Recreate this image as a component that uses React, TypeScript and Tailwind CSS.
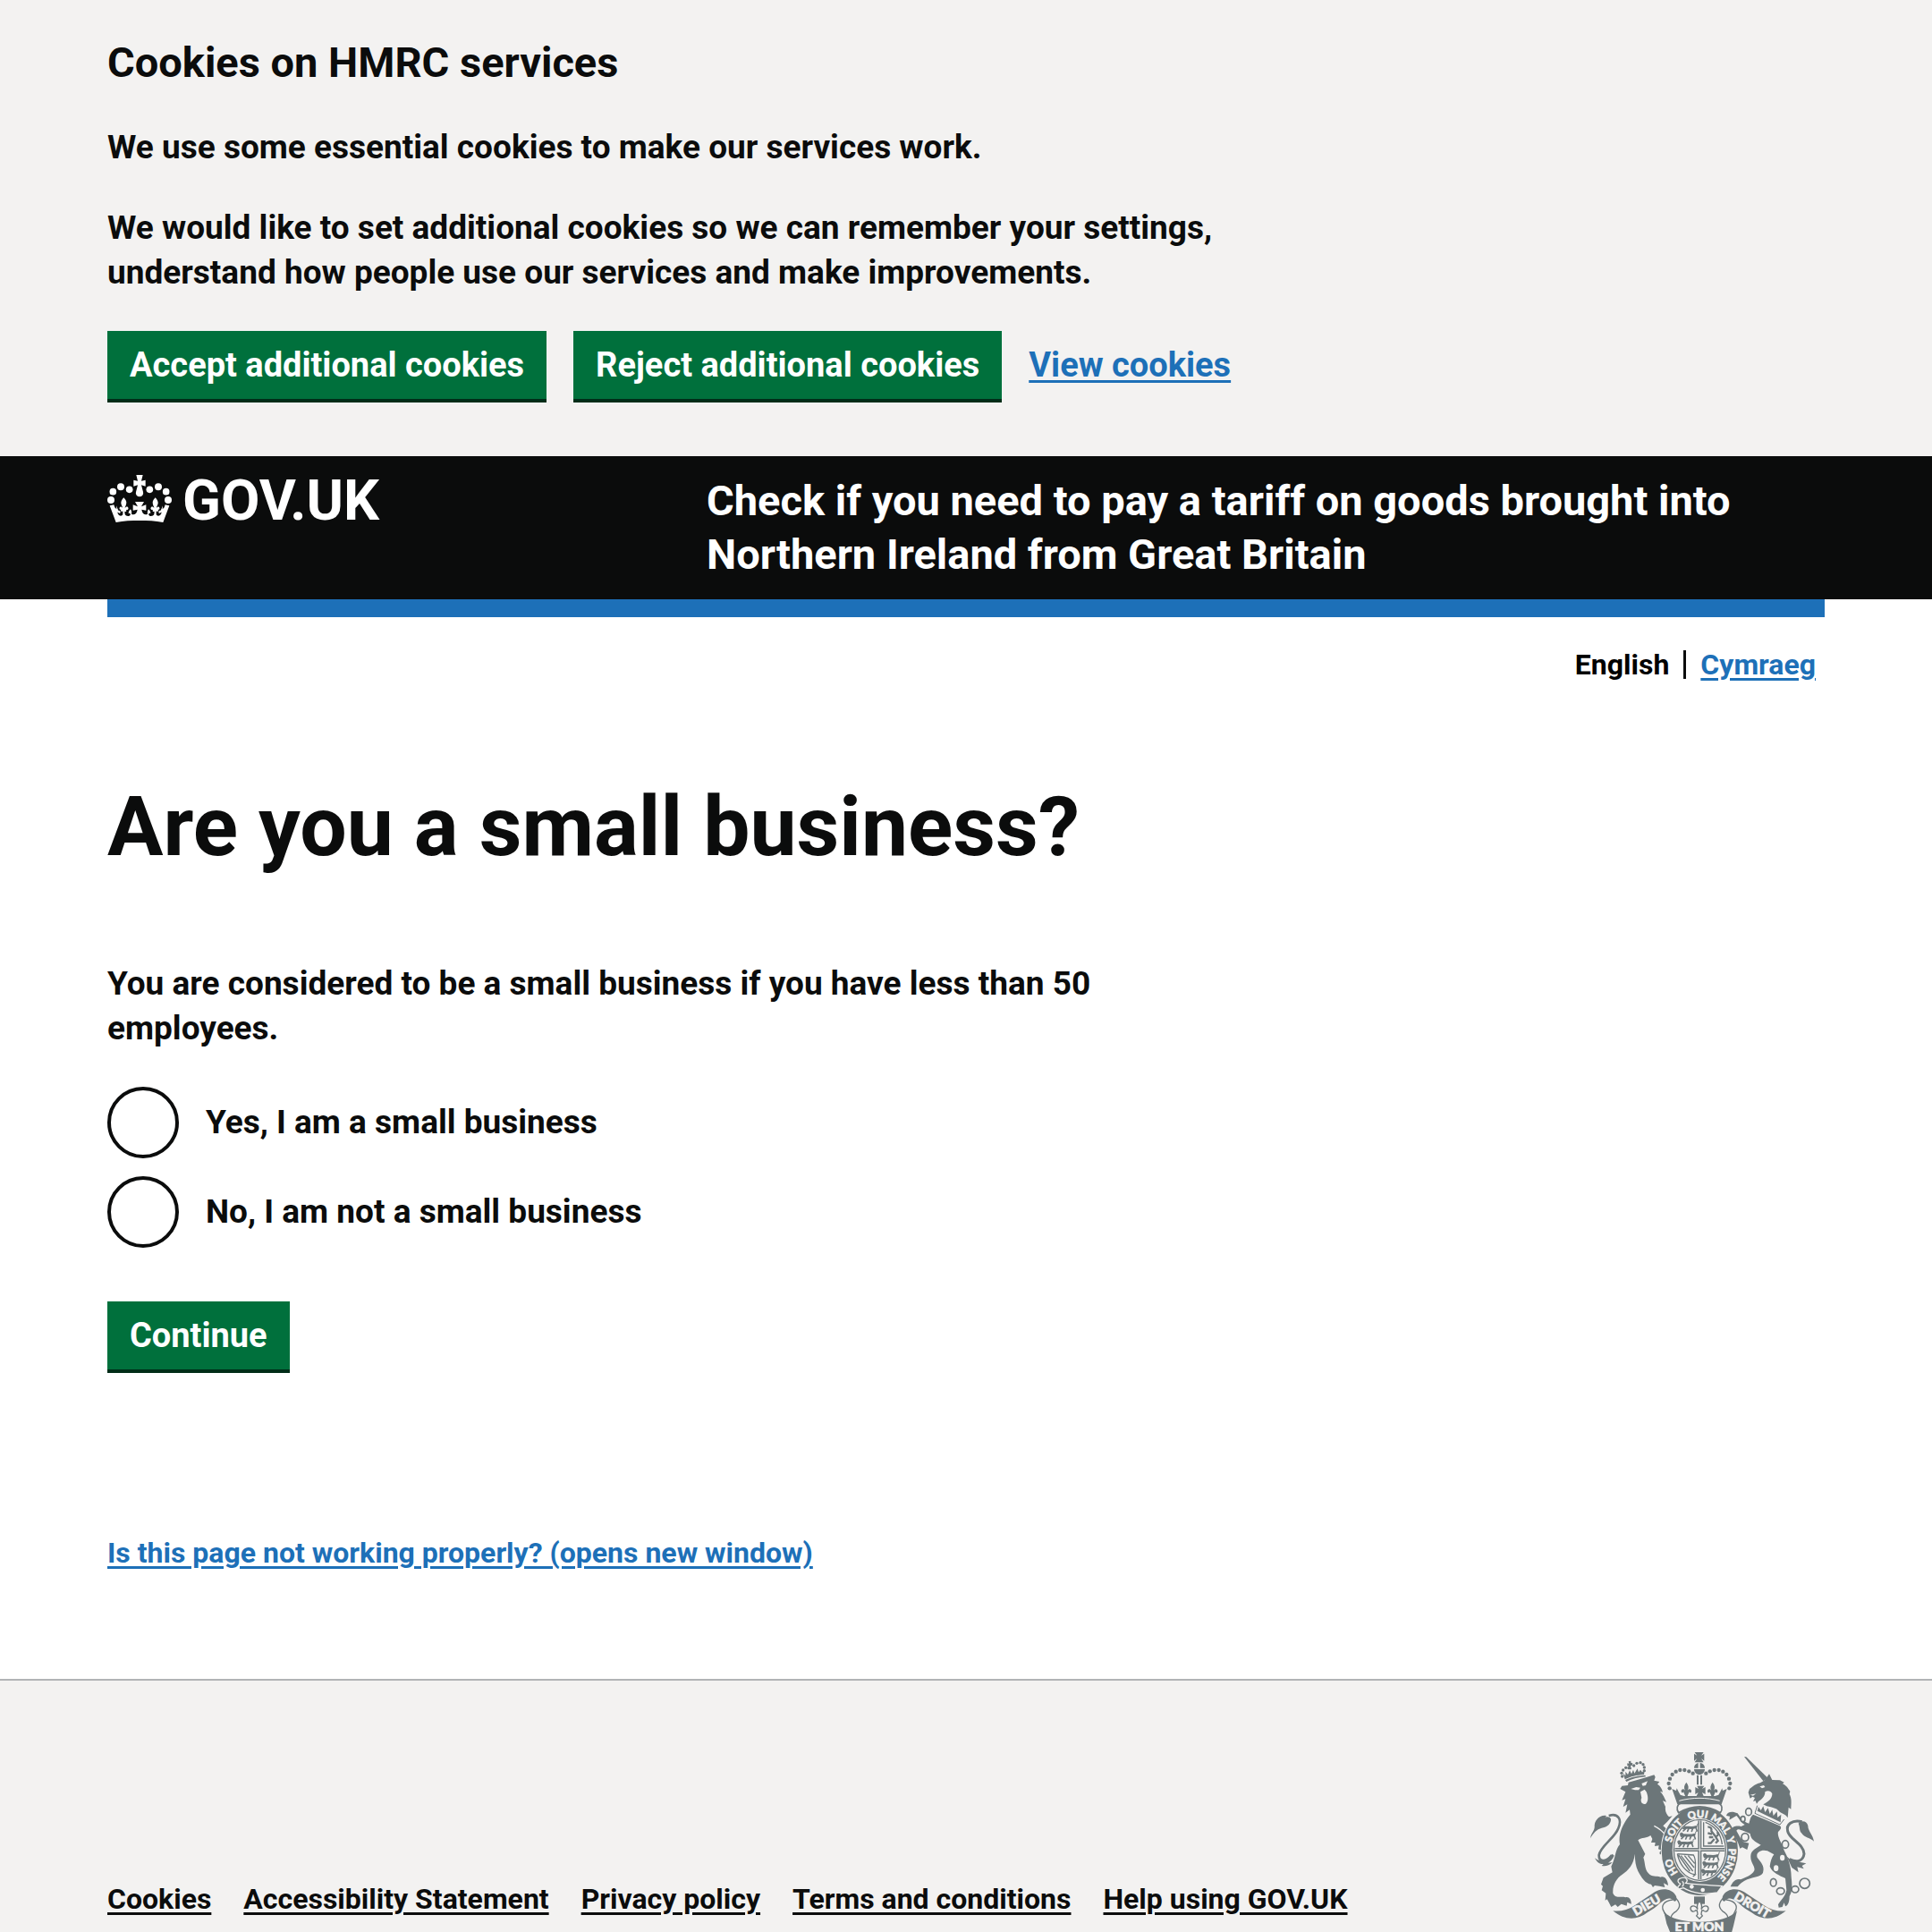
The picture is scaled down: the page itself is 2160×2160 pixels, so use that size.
import type { ReactNode } from "react";

const LIGHT = "#f3f2f1";
const GREY = "#6c7679";

function Container({ className = "", children }: { className?: string; children: ReactNode }) {
  return <div className={`mx-auto w-full max-w-[2160px] px-30 ${className}`}>{children}</div>;
}

function Button({ children }: { children: ReactNode }) {
  return (
    <button
      type="button"
      className="mb-1 h-19 cursor-pointer bg-[#00703c] px-[25px] text-[38px] leading-[50px] text-white shadow-[0_4px_0_#002d18]"
    >
      {children}
    </button>
  );
}

function CrownHalf() {
  return (
    <>
      <circle cx="72" cy="147" r="12" />
      <circle cx="79" cy="119" r="11.5" />
      <circle cx="105" cy="103" r="12" />
      <circle cx="134" cy="112" r="11.5" />
      <path d="M68 166L82 163L85 172L91 178L90 166L97 182C104 181 106 188 102 192C98 190 96 188 94 188C96 200 108 204 112 196L112 184C108 188 103 184 106 179C100 181 99 173 103 170C107 168 110 171 111 174C112 168 106 166 106 155C107 148 112 143 115 139C119 144 124 149 124 155C124 165 119 168 119 174C121 170 126 168 129 171C133 176 129 182 123 179C126 185 122 188 118 185L119 195C122 202 134 203 137 197C139 192 134 190 131 192C131 186 134 182 138 178C142 184 142 190 141 194C149 199 159 194 161 179L146 182V163L162 169L153 153H169V216C140 216 115 217 89 222Z" />
    </>
  );
}

function GovCrown() {
  return (
    <svg viewBox="60 60 216 162" className="h-[54px] w-[72px]" fill="#fff" aria-hidden="true">
      <CrownHalf />
      <g transform="matrix(-1 0 0 1 336 0)">
        <CrownHalf />
      </g>
      <path d="M157 63H179L174 83L188 80V101L174 97L180 120A12.5 12.5 0 1 1 156 120L162 97L148 101V80L162 83Z" />
    </svg>
  );
}

const ARCH: [number, number][] = [
  [320, 178], [317, 162], [321, 146], [329, 132], [341, 122], [355, 117], [370, 117], [385, 121], [398, 128],
];
const LION_CROWN: [number, number][] = [
  [161, 138], [159, 127], [164, 117], [173, 109], [183, 110], [200, 102], [210, 94], [222, 92], [231, 98], [235, 108], [235, 119],
];

function Fleur({ x, y }: { x: number; y: number }) {
  return (
    <path
      transform={`translate(${x} ${y})`}
      d="M0 -24C8 -14 9 -6 4 4C8 -4 18 -2 17 7C16 12 11 12 9 8C9 14 5 16 4 22H-4C-5 16 -9 14 -9 8C-11 12 -16 12 -17 7C-18 -2 -8 -4 -4 4C-9 -6 -8 -14 0 -24Z"
    />
  );
}

function WalkingLion({ x, y }: { x: number; y: number }) {
  return (
    <g transform={`translate(${x} ${y})`} fill="none" stroke={GREY} strokeLinecap="round">
      <path d="M4 9C16 4 30 12 46 6" strokeWidth="9" />
      <circle cx="4" cy="4" r="5" fill={GREY} strokeWidth="2" />
      <path d="M12 11L4 19M22 11L18 20M36 10L32 20M46 8L50 19" strokeWidth="5" />
      <path d="M47 6C56 2 46 -6 54 -5" strokeWidth="3" />
    </g>
  );
}

function MottoText({ offset, children }: { offset: string; children: string }) {
  return (
    <text fontSize="34" textAnchor="middle" fill={LIGHT} stroke={LIGHT} strokeWidth="1.5">
      <textPath href="#garter" startOffset={offset}>
        {children}
      </textPath>
    </text>
  );
}

function RoyalArms() {
  return (
    <svg
      viewBox="54 57 750 603"
      className="h-[201px] w-[250px] font-['Lato',sans-serif] font-black"
      fill={GREY}
      role="img"
      aria-label="Royal coat of arms"
    >
      <defs>
        <path id="garter" d="M421 498A97 111 0 0 1 421 276A97 111 0 0 1 421 498" />
        <clipPath id="oval">
          <ellipse cx="421" cy="385" rx="84" ry="99" />
        </clipPath>
      </defs>

      {/* Lion supporter */}
      <path
        d="M116 270C150 260 160 285 148 312C136 345 88 372 83 402C82 424 104 428 126 402"
        fill="none" stroke={GREY} strokeWidth="8"
      />
      <path d="M54 346C56 326 70 322 68 302C70 282 88 266 108 270L104 275C116 272 124 276 123 285C120 302 108 308 92 311C76 315 64 328 54 346Z" />
      <path d="M69 412C82 424 104 424 128 398L134 404C128 418 120 424 114 428L128 426C118 438 104 440 92 438L98 432C86 434 76 426 69 412Z" />
      <path d="M154 180L160 170L180 168L182 158L240 142L268 133L272 140L268 152L286 156L279 164C290 170 294 180 297 191L288 188C298 198 304 212 309 224L297 220L306 240C304 256 310 266 318 274L329 271L312 290L298 304L316 320C326 344 334 372 332 404L322 414L308 412L312 404L294 412L298 398L288 400C284 394 288 388 294 386L282 382L284 370L270 372L272 360L258 360L262 348L256 336C244 346 226 342 214 352L238 398L232 410C238 426 236 448 248 462C262 478 274 470 290 476C302 470 314 484 315 504L300 496L304 510L286 506L270 504L264 510L258 500C238 498 226 478 214 456C206 440 204 420 203 398C200 434 182 452 160 468C142 480 128 502 130 530C140 550 160 538 172 544C184 540 192 552 191 566L178 560L176 572L158 566L146 576L138 568L124 576L116 560L110 550L104 554L106 530L92 520L96 506L90 500L98 478L128 460L124 440C140 410 136 386 153 366C146 330 166 292 188 266L186 250L172 260L178 232L164 240L172 214L160 218L172 190Z" />
      <path d="M190 180L208 174L222 176L216 184L204 184ZM226 162L246 154L240 168L230 170ZM222 190L236 182L242 190C248 204 250 222 240 230C228 234 220 222 226 210Z" fill={LIGHT} />
      <path d="M268 304C284 312 298 324 308 336" fill="none" stroke={LIGHT} strokeWidth="4" />
      {LION_CROWN.map(([cx, cy]) => <circle key={`${cx}-${cy}`} cx={cx} cy={cy} r="5" />)}
      <path d="M182 88L190 86L190 92L196 94L194 102L189 102L192 114L186 115L183 104L178 102L178 94L184 95Z" />
      <path d="M164 128L172 136L172 122L180 132L186 118L192 130L198 116L202 128L212 112L216 124L222 116L228 124L236 118L234 132C208 134 190 138 170 148Z" />
      <path d="M171 150C190 140 216 136 238 134L240 139C216 141 194 146 175 156Z" />

      {/* Garter and quartered shield */}
      <ellipse cx="421" cy="388" rx="128" ry="149" stroke={LIGHT} strokeWidth="5" className="[paint-order:stroke]" />
      <ellipse cx="421" cy="385" rx="92" ry="107" fill={LIGHT} />
      <ellipse cx="421" cy="385" rx="87" ry="102" fill="none" stroke={GREY} strokeWidth="4" />
      <g clipPath="url(#oval)">
        <path d="M421 270V500M320 384H520" stroke={GREY} strokeWidth="12" />
        <path d="M421 270V500M320 384H520" stroke={LIGHT} strokeWidth="3" />
        <WalkingLion x={362} y={302} />
        <WalkingLion x={356} y={328} />
        <WalkingLion x={348} y={354} />
        <WalkingLion x={434} y={398} />
        <WalkingLion x={432} y={424} />
        <WalkingLion x={428} y={450} />
        <path d="M434 292V372H502M440 292C470 304 492 330 496 366" fill="none" stroke={GREY} strokeWidth="4" />
        <path
          d="M448 308C458 306 462 314 460 322L474 340C484 338 486 328 478 326M474 340L482 354L474 362M462 332L448 328M466 342L452 342M470 348L458 362H448"
          fill="none" stroke={GREY} strokeWidth="7"
        />
        <path d="M346 398L400 402C412 420 404 444 406 466M346 398C352 430 374 462 406 468L398 474M358 404L398 456M370 404L402 444M382 404L404 430M350 402L388 456" fill="none" stroke={GREY} strokeWidth="4" />
      </g>
      <MottoText offset="17%">HO</MottoText>
      <MottoText offset="35%">SOIT</MottoText>
      <MottoText offset="49%">QUI</MottoText>
      <MottoText offset="61%">MAL</MottoText>
      <MottoText offset="70%">Y</MottoText>
      <MottoText offset="82%">PENSE</MottoText>
      <path d="M352 482C376 470 384 486 374 496C400 500 450 502 496 506L480 528C440 536 396 530 366 512L352 516C340 508 356 504 356 498C346 494 346 486 352 482Z" stroke={LIGHT} strokeWidth="4" />
      <path d="M362 490C370 496 366 504 362 508" stroke={LIGHT} strokeWidth="4" fill="none" />
      <circle cx="394" cy="508" r="7" fill={LIGHT} />
      <circle cx="431" cy="519" r="7" fill={LIGHT} />

      {/* Unicorn supporter */}
      <path d="M570 72L577 73L650 144L634 154Z" />
      <path d="M584 192L588 180C600 172 606 164 624 160L640 150L654 130L664 150L690 151L704 158L699 163C712 168 718 180 724 188L722 198C730 212 728 228 727 248L719 242L716 277C708 262 696 266 684 252C672 240 648 242 634 232C650 224 664 214 664 196C660 186 648 184 640 190C640 206 630 214 618 222L612 230L608 220L600 222L606 210L598 206L590 212Z" />
      <path d="M622 172L636 168L640 174L630 178ZM590 200L610 196L600 203Z" fill={LIGHT} />
      <path d="M614 236L606 262L690 300L704 282" fill="none" stroke={GREY} strokeWidth="3" />
      <path d="M614 254L618 240L626 252L634 238L640 258L650 244L656 264L664 250L668 270L680 256L682 276L694 266L692 292Z" />
      <path d="M600 266L686 302C698 306 694 316 684 324C680 340 696 360 704 386C716 408 728 440 728 474C730 498 734 520 722 540C722 556 718 572 708 574L704 562L698 576L686 578L684 568C692 554 708 542 712 520L708 480C690 470 664 462 656 440C658 424 662 410 670 400L648 388C626 382 608 394 614 410C624 424 638 436 634 456C634 474 606 474 580 484C566 490 554 500 548 508H524C532 492 540 480 558 484C574 478 596 470 604 454C608 438 590 428 592 404C592 386 612 378 626 368C606 356 592 350 590 330L570 322C556 316 550 312 544 320L556 342L568 358L586 362L580 384L564 376L556 380L550 362L544 350L530 318C526 308 540 302 560 306L572 300C556 292 552 276 544 270L530 278L520 284L522 272L510 270C514 256 530 254 548 262C562 284 572 292 586 296C590 284 590 274 600 266Z" />
      <path
        d="M764 290C730 282 710 300 716 322C722 350 770 364 771 398C768 420 750 430 722 416"
        fill="none" stroke={GREY} strokeWidth="9"
      />
      <path d="M752 296C764 284 780 288 784 304C784 322 800 332 804 356C792 344 772 344 762 328C754 318 758 308 752 296ZM712 406L728 420L748 424L778 430L764 438L770 448L748 442L752 460L730 444Z" />
      <g fill="none" stroke={GREY} strokeWidth="5">
        <ellipse cx="585" cy="257" rx="10" ry="12" />
        <ellipse cx="566" cy="281" rx="7" ry="9" fill={LIGHT} />
        <ellipse cx="573" cy="342" rx="12" ry="13" fill={LIGHT} />
        <ellipse cx="708" cy="366" rx="11" ry="13" fill={LIGHT} />
        <ellipse cx="668" cy="494" rx="10" ry="13" />
        <ellipse cx="692" cy="523" rx="13" ry="11" />
        <ellipse cx="741" cy="517" rx="12" ry="11" />
        <circle cx="773" cy="497" r="17" />
      </g>
      <ellipse cx="698" cy="411" rx="8" ry="10" fill={LIGHT} />
      <ellipse cx="677" cy="446" rx="8" ry="10" fill={LIGHT} />

      {/* Royal crown */}
      <path d="M358 228H482C498 232 498 250 490 260C446 234 396 234 350 260C342 248 344 232 358 228Z" fill={LIGHT} stroke={GREY} strokeWidth="5" />
      {ARCH.map(([cx, cy]) => (
        <g key={`${cx}-${cy}`}>
          <circle cx={cx} cy={cy} r="6.5" />
          <circle cx={840 - cx} cy={cy} r="6.5" />
        </g>
      ))}
      <path d="M404 57H434L426 68L436 62V86L426 78L434 91H404L412 78L402 86V62L412 68Z" />
      <path d="M402 110A18 18 0 0 1 416 93V110ZM422 110V93A18 18 0 0 1 438 110ZM402 114H438C438 124 430 132 420 132C410 132 402 124 402 114ZM411 134H417V166H411ZM423 134H429V166H423Z" />
      <path d="M412 170H436L429 180L440 174V198L429 192L434 204H410L416 192L406 198V174L417 180Z" />
      <Fleur x={376} y={182} />
      <Fleur x={464} y={182} />
      <path d="M328 180L342 186L344 178L350 190L356 200L368 204H472L484 200L490 190L496 178L498 186L512 180L494 232H346Z" />
      <path d="M352 220C396 208 444 208 488 220" fill="none" stroke={LIGHT} strokeWidth="3" />

      {/* Motto ribbon */}
      <path d="M402 541H438V566H402Z" />
      <path d="M420 556C428 566 430 574 426 584C434 568 450 570 450 582C448 592 438 594 434 588H428L426 600L430 606L420 616L410 606L414 600L412 588H406C402 594 392 592 390 582C390 570 406 568 414 584C410 574 412 566 420 556Z" fill={LIGHT} stroke={GREY} strokeWidth="4" />
      <path d="M130 589C156 592 180 586 204 570L270 526C296 510 330 516 342 540C346 556 338 562 330 552C306 534 284 576 246 594C210 622 170 622 130 589Z" />
      <path d="M710 589C684 592 660 586 636 570L570 526C544 510 510 516 498 540C494 556 502 562 510 552C534 534 556 576 594 594C630 622 670 622 710 589Z" />
      <g fill="none" stroke={GREY} strokeWidth="4">
        <path d="M340 546C360 566 356 582 334 596C326 602 322 610 328 620M330 552C300 556 290 572 300 590L316 622" />
        <path d="M500 546C480 566 484 582 506 596C514 602 518 610 512 620M510 552C540 556 550 572 540 590L524 622" />
      </g>
      <path d="M300 588C312 612 360 626 420 626S528 612 546 588L534 640L528 662H322L310 632Z" />
      <g fill={LIGHT} stroke={LIGHT} strokeWidth="2" fontSize="42" textAnchor="middle">
        <text transform="translate(250 582) rotate(-30)">DIEU</text>
        <text transform="translate(590 582) rotate(30)">DROIT</text>
        <text x="420" y="657">ET MON</text>
      </g>
    </svg>
  );
}

const FOOTER_LINKS = ["Cookies", "Accessibility Statement", "Privacy policy", "Terms and conditions", "Help using GOV.UK"];
const OPTIONS = [
  { value: "yes", label: "Yes, I am a small business" },
  { value: "no", label: "No, I am not a small business" },
];

export default function App() {
  return (
    <div className="bg-white font-['Roboto',sans-serif] text-[37px] leading-[50px] font-bold text-[#0b0c0c]">
      <section aria-label="Cookies on HMRC services" className="bg-[#f3f2f1] pt-10 pb-15">
        <Container>
          <h2 className="text-[47px] leading-[60px]">Cookies on HMRC services</h2>
          <div className="mt-10 max-w-[1280px] space-y-10 pr-[30px]">
            <p>We use some essential cookies to make our services work.</p>
            <p>
              We would like to set additional cookies so we can remember your settings, understand how people use our
              services and make improvements.
            </p>
          </div>
          <div className="mt-10 flex flex-wrap items-center gap-x-[30px]">
            <Button>Accept additional cookies</Button>
            <Button>Reject additional cookies</Button>
            <a href="#cookies" className="mb-1 text-[38px] text-[#1d70b8] underline decoration-3 underline-offset-4">
              View cookies
            </a>
          </div>
        </Container>
      </section>

      <header className="bg-[#0b0c0c] text-white">
        <Container className="flex py-5">
          <div className="w-1/3 shrink-0">
            <a href="#govuk" className="inline-flex items-start gap-3">
              <GovCrown />
              <span className="text-[63px] leading-[60px]">GOV.UK</span>
            </a>
          </div>
          <a href="#start" className="ml-[30px] flex-1 text-[47px] leading-[60px]">
            Check if you need to pay a tariff on goods brought into Northern Ireland from Great Britain
          </a>
        </Container>
      </header>

      <Container>
        <div className="h-5 bg-[#1d70b8]" />
        <nav aria-label="Language" className="flex items-center justify-end px-[10px] pt-[33px] text-[32px] leading-10">
          <span className="text-black">English</span>
          <span className="mx-4 h-8 w-[3px] bg-[#0b0c0c]" />
          <a href="#cy" lang="cy" className="text-[#1d70b8] underline decoration-3 underline-offset-4">
            Cymraeg
          </a>
        </nav>

        <main className="w-2/3 pt-28 pr-[30px]">
          <h1 id="question" className="text-[93px] leading-[100px]">
            Are you a small business?
          </h1>
          <form className="mt-25">
            <p>You are considered to be a small business if you have less than 50 employees.</p>
            <fieldset aria-labelledby="question" className="mt-10 space-y-5">
              {OPTIONS.map(({ value, label }) => (
                <div key={value} className="flex items-center gap-[30px]">
                  <input
                    id={value}
                    type="radio"
                    name="small-business"
                    value={value}
                    className="size-20 shrink-0 appearance-none rounded-full border-4 border-[#0b0c0c] checked:bg-[#0b0c0c] checked:bg-clip-content checked:p-3.5"
                  />
                  <label htmlFor={value}>{label}</label>
                </div>
              ))}
            </fieldset>
            <div className="mt-15 flex">
              <Button>Continue</Button>
            </div>
          </form>
        </main>

        <div className="pt-[181px] pb-[121px] text-[32px] leading-10">
          <a href="#report" className="text-[#1d70b8] underline decoration-3 underline-offset-4">
            Is this page not working properly? (opens new window)
          </a>
        </div>
      </Container>

      <footer className="border-t-2 border-[#b1b4b6] bg-[#f3f2f1] text-[32px]">
        <Container className="flex items-end justify-between pt-20">
          <ul className="mb-[17px] flex flex-wrap gap-x-9 leading-10">
            {FOOTER_LINKS.map((link) => (
              <li key={link}>
                <a href="#footer" className="underline decoration-3 underline-offset-4">
                  {link}
                </a>
              </li>
            ))}
          </ul>
          <div className="mr-3 shrink-0">
            <RoyalArms />
          </div>
        </Container>
      </footer>
    </div>
  );
}
